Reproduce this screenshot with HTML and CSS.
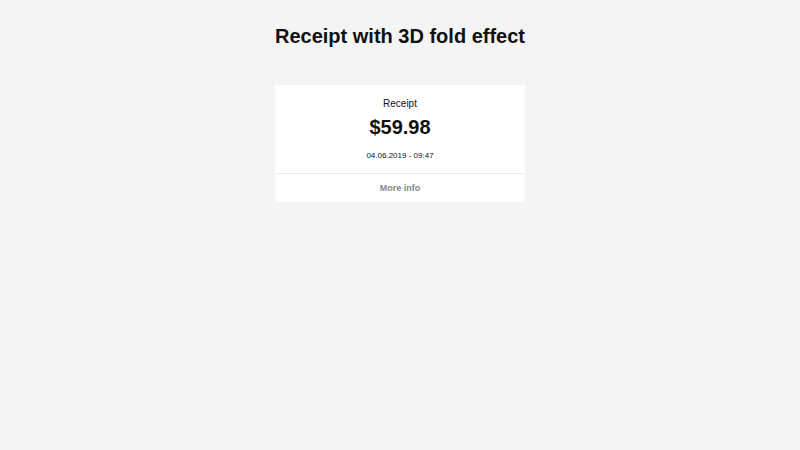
FILE: index.html
```html
<!DOCTYPE html>
<html>
<head>
<meta charset="utf-8">
<link rel="stylesheet" href="styles.css">
</head>
<body>
<h1 class="title">Receipt with 3D fold effect</h1>
<div class="receipt">
  <div class="receipt-top">
    <div class="label">Receipt</div>
    <div class="price">$59.98</div>
    <div class="date">04.06.2019 - 09:47</div>
  </div>
  <div class="receipt-bottom">More info</div>
</div>
</body>
</html>
```
FILE: styles.css
```css
html, body {
  margin: 0;
  padding: 0;
  background: #f4f4f4;
  font-family: "Liberation Sans", Arial, sans-serif;
  color: #111;
}
body {
  display: flex;
  flex-direction: column;
  align-items: center;
}
.title {
  margin: 24px 0 0;
  font-size: 20px;
  line-height: 24px;
  font-weight: bold;
}
.receipt {
  margin-top: 37px;
  width: 250px;
  background: #fff;
  text-align: center;
}
.receipt-top {
  padding: 12px 0 12px;
}
.label {
  font-size: 10px;
  line-height: 14px;
}
.price {
  margin-top: 4px;
  font-size: 20px;
  line-height: 24px;
  font-weight: bold;
}
.date {
  margin-top: 12px;
  font-size: 8px;
  line-height: 10px;
}
.receipt-bottom {
  border-top: 1px solid #ececec;
  height: 28px;
  line-height: 28px;
  font-size: 9px;
  font-weight: bold;
  color: #888;
}
```
